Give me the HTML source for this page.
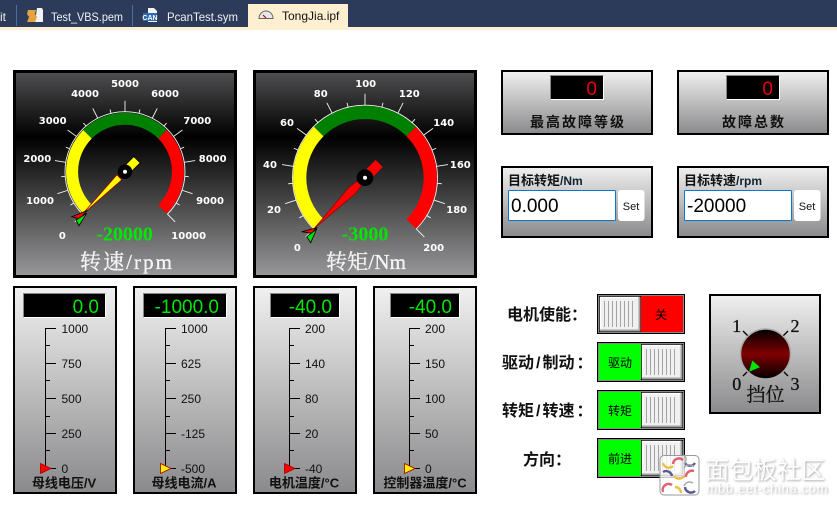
<!DOCTYPE html>
<html><head><meta charset="utf-8"><style>
html,body{margin:0;padding:0;background:#fff;width:837px;height:507px;overflow:hidden}
svg{display:block}
text{font-family:"Liberation Sans","Noto Sans CJK SC",sans-serif}
.gl{font-family:"DejaVu Sans",sans-serif;font-weight:bold;font-size:10px;fill:#fff;text-anchor:middle}
.gt{font-family:"Liberation Serif","Noto Serif CJK SC",serif;font-size:21px;fill:#f4f4f4;stroke:#f4f4f4;stroke-width:.35;text-anchor:middle}
.gv{font-family:"Liberation Serif",serif;font-weight:bold;font-size:20px;fill:#00e600;text-anchor:middle}
.dv{font-size:19px;fill:#00e600;text-anchor:end}
.dr{font-size:19px;fill:#f00000;text-anchor:end}
.sc{font-size:12px;fill:#111}
.bl{font-size:13px;font-weight:bold;fill:#111;text-anchor:middle}
.pl{font-size:14px;font-weight:bold;fill:#111;text-anchor:middle;letter-spacing:2px}
.sl{font-size:13px;font-weight:bold;fill:#111}
.sl2{font-size:12px;font-weight:bold;fill:#123}
.set{font-size:11px;fill:#111;text-anchor:middle}
.lb{font-size:16px;font-weight:bold;fill:#111}
.sw{font-size:12px;fill:#000;text-anchor:middle}
.kn{font-family:"Liberation Serif","Noto Serif CJK SC",serif;font-size:18px;fill:#111;stroke:#111;stroke-width:.3;text-anchor:middle}
.tab{font-size:12px;fill:#f0f0f0}
.wm{filter:drop-shadow(1px 1px 1px rgba(0,0,0,.35))}
</style></head><body>
<svg width="837" height="507" viewBox="0 0 837 507" xmlns="http://www.w3.org/2000/svg">
<defs>
<linearGradient id="gg" x1="0" y1="0" x2="0" y2="1"><stop offset="0" stop-color="#505052"/><stop offset=".32" stop-color="#000"/><stop offset="1" stop-color="#98989a"/></linearGradient>
<linearGradient id="pg" x1="0" y1="0" x2="0" y2="1"><stop offset="0" stop-color="#f0f0f0"/><stop offset="1" stop-color="#8a8a8c"/></linearGradient>
<linearGradient id="kg" x1="0" y1="0" x2="0" y2="1"><stop offset="0" stop-color="#000"/><stop offset=".5" stop-color="#800000"/><stop offset="1" stop-color="#000"/></linearGradient>
<g id="knob">
<rect x="-1" y="-1" width="42" height="36" fill="#000"/>
<rect x="0" y="0" width="40" height="34" fill="#f0f0f0"/>
<path d="M.5 34V.5H40" fill="none" stroke="#fff" stroke-width="1.500"/>
<path d="M39.500 0V33.500H0" fill="none" stroke="#a0a0a0" stroke-width="2"/>
<path d="M4.500 4V30M8.500 4V30M12.500 4V30M16.500 4V30M20.500 4V30M24.500 4V30M28.500 4V30M32.500 4V30" stroke="#a4a4a4" stroke-width="1"/>
</g>
</defs>

<!-- tab bar -->
<rect width="837" height="27" fill="#2b3b59"/>
<rect y="27" width="837" height="3" fill="#fdf0d2"/>
<rect x="16" y="5" width="1" height="21" fill="#4d6c9f"/>
<rect x="132" y="5" width="1" height="21" fill="#4d6c9f"/>
<rect x="248" y="4" width="100" height="24" fill="#fdefd0"/>
<text x="0" y="21" class="tab">it</text>
<text x="51" y="21" class="tab" textLength="72" lengthAdjust="spacingAndGlyphs">Test_VBS.pem</text>
<text x="167" y="21" class="tab" textLength="71" lengthAdjust="spacingAndGlyphs">PcanTest.sym</text>
<text x="282" y="20" class="tab" style="fill:#111">TongJia.ipf</text>
<path d="M37 8h5l1 2v12h-8z" fill="#f2f2f2"/><path d="M28 10h8l-1 4 2 3-2 5h-8l2-5-2-3z" fill="#e3a23c"/>
<path d="M148 8h6l3 3v11h-9z" fill="#f2f2f2"/><rect x="143" y="13" width="14" height="8" fill="#2d6bb0"/><text x="150" y="20" style="font-size:7px;font-weight:bold;fill:#fff" text-anchor="middle">CAN</text>
<path d="M259 18.500a7 7.500 0 0 1 14 0z" fill="#e8e8e8" stroke="#666"/><path d="M266 18l-3-3" stroke="#c00" stroke-width="1.200"/>

<!-- gauge 1 -->
<rect x="14.500" y="71.500" width="221" height="205" fill="url(#gg)" stroke="#000" stroke-width="3"/>
<g transform="translate(125,171.700)">
<g stroke="#f4f4f4" stroke-width=".9" fill="none">
<circle r="60" stroke-dasharray="282.700 94.300" transform="rotate(135)"/>
<path transform="rotate(-135)" d="M0-60V-71"/><path transform="rotate(-121.500)" d="M0-60V-64"/>
<path transform="rotate(-108)" d="M0-60V-71"/><path transform="rotate(-94.500)" d="M0-60V-64"/>
<path transform="rotate(-81)" d="M0-60V-71"/><path transform="rotate(-67.500)" d="M0-60V-64"/>
<path transform="rotate(-54)" d="M0-60V-71"/><path transform="rotate(-40.500)" d="M0-60V-64"/>
<path transform="rotate(-27)" d="M0-60V-71"/><path transform="rotate(-13.500)" d="M0-60V-64"/>
<path d="M0-60V-71"/><path transform="rotate(13.500)" d="M0-60V-64"/>
<path transform="rotate(27)" d="M0-60V-71"/><path transform="rotate(40.500)" d="M0-60V-64"/>
<path transform="rotate(54)" d="M0-60V-71"/><path transform="rotate(67.500)" d="M0-60V-64"/>
<path transform="rotate(81)" d="M0-60V-71"/><path transform="rotate(94.500)" d="M0-60V-64"/>
<path transform="rotate(108)" d="M0-60V-71"/><path transform="rotate(121.500)" d="M0-60V-64"/>
<path transform="rotate(135)" d="M0-60V-71"/>
</g>
<path d="M-41.700 41.700A59 59 0 0 1 -41.700 -41.700L-33.200 -33.200A47 47 0 0 0 -33.200 33.200Z" fill="#ffff00"/>
<path d="M-41.700 -41.700A59 59 0 0 1 41.700 -41.700L33.200 -33.200A47 47 0 0 0 -33.200 -33.200Z" fill="#008000"/>
<path d="M41.700 -41.700A59 59 0 0 1 41.700 41.700L33.200 33.200A47 47 0 0 0 33.200 -33.200Z" fill="#ff0000"/>
<g transform="rotate(-135)">
<path d="M-3.500 -8L0 -62L3.500 -8Z" fill="#ffff00" stroke="#a00000" stroke-width=".8"/>
<path d="M-4.500 5H4.500V17H-4.500Z" fill="#ffff00" stroke="#000" stroke-width=".8"/>
</g>
<circle r="7.200" fill="#000"/><circle r="2" fill="#fff"/>
</g>
<path d="M71.700 216.700L86.700 210.700L80 219Z" fill="#f00" stroke="#000" stroke-width=".8"/>
<path d="M79 225.700L86.700 213.300L76 220Z" fill="#00e000" stroke="#000" stroke-width=".8"/>
<text class="gl" x="62.300" y="239">0</text><text class="gl" x="40" y="204">1000</text><text class="gl" x="37.300" y="162">2000</text><text class="gl" x="52.700" y="124">3000</text><text class="gl" x="85" y="97">4000</text><text class="gl" x="125" y="87">5000</text><text class="gl" x="165" y="97">6000</text><text class="gl" x="197.300" y="124">7000</text><text class="gl" x="212.700" y="162">8000</text><text class="gl" x="210" y="204">9000</text><text class="gl" x="188.700" y="239">10000</text>
<text class="gv" x="124.500" y="240.500">-20000</text>
<text class="gt" x="126" y="269" textLength="92">转速/rpm</text>

<!-- gauge 2 -->
<rect x="254.500" y="71.500" width="221" height="205" fill="url(#gg)" stroke="#000" stroke-width="3"/>
<g transform="translate(365,177.700)">
<g stroke="#f4f4f4" stroke-width=".9" fill="none">
<circle r="72.500" stroke-dasharray="341.600 113.900" transform="rotate(135)"/>
<path transform="rotate(-135)" d="M0-72V-84"/><path transform="rotate(-121.500)" d="M0-72V-77"/>
<path transform="rotate(-108)" d="M0-72V-84"/><path transform="rotate(-94.500)" d="M0-72V-77"/>
<path transform="rotate(-81)" d="M0-72V-84"/><path transform="rotate(-67.500)" d="M0-72V-77"/>
<path transform="rotate(-54)" d="M0-72V-84"/><path transform="rotate(-40.500)" d="M0-72V-77"/>
<path transform="rotate(-27)" d="M0-72V-84"/><path transform="rotate(-13.500)" d="M0-72V-77"/>
<path d="M0-72V-84"/><path transform="rotate(13.500)" d="M0-72V-77"/>
<path transform="rotate(27)" d="M0-72V-84"/><path transform="rotate(40.500)" d="M0-72V-77"/>
<path transform="rotate(54)" d="M0-72V-84"/><path transform="rotate(67.500)" d="M0-72V-77"/>
<path transform="rotate(81)" d="M0-72V-84"/><path transform="rotate(94.500)" d="M0-72V-77"/>
<path transform="rotate(108)" d="M0-72V-84"/><path transform="rotate(121.500)" d="M0-72V-77"/>
<path transform="rotate(135)" d="M0-72V-84"/>
</g>
<path d="M-50.900 50.900A72 72 0 0 1 -50.900 -50.900L-41.500 -41.500A58.700 58.700 0 0 0 -41.500 41.500Z" fill="#ffff00"/>
<path d="M-50.900 -50.900A72 72 0 0 1 50.900 -50.900L41.500 -41.500A58.700 58.700 0 0 0 -41.500 -41.500Z" fill="#008000"/>
<path d="M50.900 -50.900A72 72 0 0 1 50.900 50.900L41.500 41.500A58.700 58.700 0 0 0 41.500 -41.500Z" fill="#ff0000"/>
<g transform="rotate(-135)">
<path d="M-3 -8L-4.500 -18L0 -72L4.500 -18L3 -8Z" fill="#ff0000" stroke="#800000" stroke-width=".6"/>
<path d="M-5 5H5V20H-5Z" fill="#ff0000"/>
</g>
<circle r="8.300" fill="#000"/><circle r="2" fill="#fff"/>
</g>
<path d="M301.700 231.700L316.700 227.700L311.700 233.300Z" fill="#f00" stroke="#000" stroke-width=".8"/>
<path d="M310.700 242.700L316.700 229L306.700 236.700Z" fill="#00e000" stroke="#000" stroke-width=".8"/>
<text class="gl" x="297.300" y="251">0</text><text class="gl" x="274" y="213">20</text><text class="gl" x="270" y="168">40</text><text class="gl" x="287" y="126">60</text><text class="gl" x="320.700" y="97">80</text><text class="gl" x="365.700" y="87">100</text><text class="gl" x="409.300" y="97">120</text><text class="gl" x="443.700" y="126">140</text><text class="gl" x="460.300" y="168">160</text><text class="gl" x="456.700" y="213">180</text><text class="gl" x="433.700" y="251">200</text>
<text class="gv" x="365" y="240.500">-3000</text>
<text class="gt" x="366" y="269" textLength="80">转矩/Nm</text>

<!-- bar panels -->
<rect x="14" y="287" width="102" height="206" fill="url(#pg)" stroke="#000" stroke-width="2"/>
<rect x="134" y="287" width="102" height="206" fill="url(#pg)" stroke="#000" stroke-width="2"/>
<rect x="254" y="287" width="102" height="206" fill="url(#pg)" stroke="#000" stroke-width="2"/>
<rect x="374" y="287" width="102" height="206" fill="url(#pg)" stroke="#000" stroke-width="2"/>

<rect x="23.500" y="293.500" width="82" height="24" fill="#000" stroke="#888"/><path d="M105.500 293.500V317.500H23.500" fill="none" stroke="#fff"/>
<rect x="143.500" y="293.500" width="83" height="24" fill="#000" stroke="#888"/><path d="M226.500 293.500V317.500H143.500" fill="none" stroke="#fff"/>
<rect x="270.500" y="293.500" width="69" height="24" fill="#000" stroke="#888"/><path d="M339.500 293.500V317.500H270.500" fill="none" stroke="#fff"/>
<rect x="390.500" y="293.500" width="69" height="24" fill="#000" stroke="#888"/><path d="M459.500 293.500V317.500H390.500" fill="none" stroke="#fff"/>
<text class="dv" x="99" y="313">0.0</text>
<text class="dv" x="219" y="313">-1000.0</text>
<text class="dv" x="332" y="313">-40.0</text>
<text class="dv" x="452" y="313">-40.0</text>

<g stroke="#000" stroke-width="1" fill="none">
<path d="M45.500 468V328.500H56M45.500 345.500H50M45.500 363.500H56M45.500 380.500H50M45.500 398.500H56M45.500 416.500H50M45.500 433.500H56M45.500 450.500H50M45.500 468.500H56"/>
<path d="M165.500 468V328.500H176M165.500 345.500H170M165.500 363.500H176M165.500 380.500H170M165.500 398.500H176M165.500 416.500H170M165.500 433.500H176M165.500 450.500H170M165.500 468.500H176"/>
<path d="M289.500 468V328.500H300M289.500 345.500H294M289.500 363.500H300M289.500 380.500H294M289.500 398.500H300M289.500 416.500H294M289.500 433.500H300M289.500 450.500H294M289.500 468.500H300"/>
<path d="M409.500 468V328.500H420M409.500 345.500H414M409.500 363.500H420M409.500 380.500H414M409.500 398.500H420M409.500 416.500H414M409.500 433.500H420M409.500 450.500H414M409.500 468.500H420"/>
</g>
<path d="M40.500 463.500L51 468.500L40.500 473.500Z" fill="#f00" stroke="#a00000" stroke-width=".8"/>
<path d="M160.500 463.500L171 468.500L160.500 473.500Z" fill="#ffee00" stroke="#a00000" stroke-width=".8"/>
<path d="M284.500 463.500L295 468.500L284.500 473.500Z" fill="#f00" stroke="#a00000" stroke-width=".8"/>
<path d="M404.500 463.500L415 468.500L404.500 473.500Z" fill="#ffee00" stroke="#a00000" stroke-width=".8"/>

<text class="sc" x="61.500" y="333">1000</text><text class="sc" x="61.500" y="368">750</text><text class="sc" x="61.500" y="403">500</text><text class="sc" x="61.500" y="438">250</text><text class="sc" x="61.500" y="473">0</text>
<text class="sc" x="181" y="333">1000</text><text class="sc" x="181" y="368">625</text><text class="sc" x="181" y="403">250</text><text class="sc" x="181" y="438">-125</text><text class="sc" x="181" y="473">-500</text>
<text class="sc" x="305" y="333">200</text><text class="sc" x="305" y="368">140</text><text class="sc" x="305" y="403">80</text><text class="sc" x="305" y="438">20</text><text class="sc" x="305" y="473">-40</text>
<text class="sc" x="425" y="333">200</text><text class="sc" x="425" y="368">150</text><text class="sc" x="425" y="403">100</text><text class="sc" x="425" y="438">50</text><text class="sc" x="425" y="473">0</text>
<text class="bl" x="64" y="487.500">母线电压/V</text>
<text class="bl" x="184" y="487.500">母线电流/A</text>
<text class="bl" x="304" y="487.500">电机温度/°C</text>
<text class="bl" x="425" y="487.500">控制器温度/°C</text>

<!-- right top panels -->
<rect x="502" y="71" width="150" height="63" fill="url(#pg)" stroke="#000" stroke-width="2"/>
<rect x="678" y="71" width="150" height="63" fill="url(#pg)" stroke="#000" stroke-width="2"/>
<rect x="550.500" y="75.500" width="53" height="24" fill="#000" stroke="#888"/><path d="M603.500 75.500V99.500H550.500" fill="none" stroke="#fff"/>
<rect x="726.500" y="75.500" width="53" height="24" fill="#000" stroke="#888"/><path d="M779.500 75.500V99.500H726.500" fill="none" stroke="#fff"/>
<text class="dr" x="597" y="95">0</text>
<text class="dr" x="773" y="95">0</text>
<text class="pl" x="578" y="127">最高故障等级</text>
<text class="pl" x="754" y="127">故障总数</text>

<rect x="502" y="167" width="150" height="70" fill="url(#pg)" stroke="#000" stroke-width="2"/>
<rect x="678" y="167" width="150" height="70" fill="url(#pg)" stroke="#000" stroke-width="2"/>
<text class="sl" x="508" y="185">目标转矩<tspan class="sl2">/Nm</tspan></text>
<text class="sl" x="684" y="185">目标转速<tspan class="sl2">/rpm</tspan></text>
<rect x="508.500" y="190.500" width="107" height="30" rx="1" fill="#fff" stroke="#0a78d2"/>
<rect x="684.500" y="190.500" width="107" height="30" rx="1" fill="#fff" stroke="#0a78d2"/>
<text x="511" y="212" style="font-size:19px;fill:#000">0.000</text>
<text x="687" y="212" style="font-size:19px;fill:#000">-20000</text>
<rect x="618" y="190" width="26.500" height="31" rx="3" fill="#fff"/>
<rect x="794" y="190" width="26.500" height="31" rx="3" fill="#fff"/>
<text class="set" x="631" y="210">Set</text>
<text class="set" x="807" y="210">Set</text>

<!-- labels -->
<text class="lb" x="507" y="320">电机使能：</text>
<text class="lb" x="502" y="368">驱动<tspan dx="2">/</tspan><tspan dx="2">制动</tspan><tspan dx="2">：</tspan></text>
<text class="lb" x="502" y="416">转矩<tspan dx="2">/</tspan><tspan dx="2">转速</tspan><tspan dx="2">：</tspan></text>
<text class="lb" x="523" y="465">方向：</text>

<!-- toggles -->
<rect x="597.500" y="294.500" width="87" height="39" fill="#888" stroke="#000"/>
<rect x="597.500" y="342.500" width="87" height="39" fill="#888" stroke="#000"/>
<rect x="597.500" y="390.500" width="87" height="39" fill="#888" stroke="#000"/>
<rect x="597.500" y="438.500" width="87" height="39" fill="#888" stroke="#000"/>
<rect x="641" y="296" width="42" height="36" fill="#ff0000"/>
<rect x="599" y="344" width="42" height="36" fill="#00ff00"/>
<rect x="599" y="392" width="42" height="36" fill="#00ff00"/>
<rect x="599" y="440" width="42" height="36" fill="#00ff00"/>
<use href="#knob" x="600" y="297"/>
<use href="#knob" x="642" y="345"/>
<use href="#knob" x="642" y="393"/>
<use href="#knob" x="642" y="441"/>
<text class="sw" x="661" y="319">关</text>
<text class="sw" x="620" y="367">驱动</text>
<text class="sw" x="620" y="415">转矩</text>
<text class="sw" x="620" y="463">前进</text>

<!-- knob panel -->
<rect x="710" y="295" width="110" height="118" fill="url(#pg)" stroke="#000" stroke-width="2"/>
<path d="M743 331L749 337M788 331L782 337M743 376L749 370M788 376L782 370" stroke="#000" stroke-width="1.300"/>
<circle cx="765.500" cy="354" r="25" fill="url(#kg)" stroke="#aaa" stroke-width="1.500"/>
<path d="M752.300 360.500L760 367.300L749 371.700Z" fill="#00e600"/>
<text class="kn" x="736.700" y="332">1</text>
<text class="kn" x="795" y="332">2</text>
<text class="kn" x="736.700" y="390">0</text>
<text class="kn" x="795" y="390">3</text>
<text class="kn" x="765.500" y="401" style="font-size:19px">挡位</text>

<!-- watermark -->
<rect x="660" y="455.500" width="39" height="39.500" rx="4" fill="#fff" fill-opacity=".78" stroke="#999" stroke-width="1"/>
<g fill="none" stroke-width="2.400">
<path d="M663 463a6 6 0 0 0 10 3" stroke="#f0c040"/><path d="M673 464a6 6 0 0 1 10-4" stroke="#e06070"/><path d="M685 463a6 6 0 0 0 10 0" stroke="#555c95"/>
<path d="M663 472a6 6 0 0 1 9 4" stroke="#555c95"/><path d="M674 476a6 6 0 0 0 10 0" stroke="#f0c040"/><path d="M686 477a6 6 0 0 1 8-6" stroke="#e06070"/>
<path d="M663 492a6 6 0 0 1 9-7" stroke="#e06070"/><path d="M675 487a6 6 0 0 1 6 6" stroke="#f0c040"/><path d="M685 487a6 6 0 0 0 10 4" stroke="#555c95"/>
<path d="M684 455a6 6 0 0 1 0 9M684 468a6 6 0 0 1 10-1M684 486a6 6 0 0 1 9-3" stroke="#aaa" stroke-width="1.500"/>
</g>
<text class="wm" x="705" y="478.500" style="font-size:24px;fill:#fff">面包板社区</text>
<text class="wm" x="706.500" y="493" textLength="121" style="font-size:13px;fill:#fff">mbb.eet-china.com</text>
</svg>
</body></html>
